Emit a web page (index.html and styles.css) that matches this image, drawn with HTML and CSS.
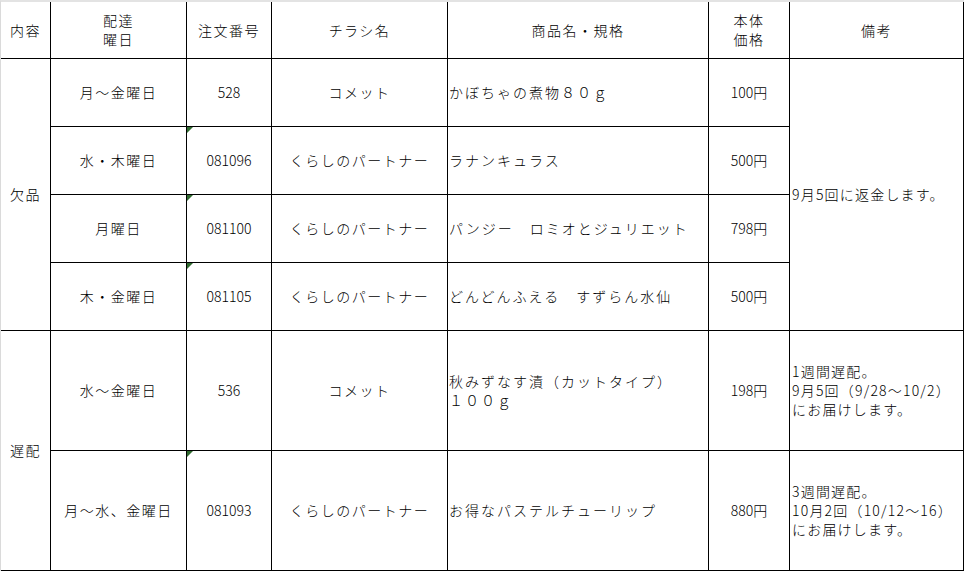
FILE: index.html
```html
<!DOCTYPE html>
<html lang="ja">
<head>
<meta charset="utf-8">
<title>欠品・遅配のお知らせ</title>
<link rel="stylesheet" href="styles.css">
</head>
<body>
<div class="sheet">
  <div class="cell">内容</div>
  <div class="cell">配達<br>曜日</div>
  <div class="cell">注文番号</div>
  <div class="cell">チラシ名</div>
  <div class="cell">商品名・規格</div>
  <div class="cell">本体<br>価格</div>
  <div class="cell">備考</div>

  <div class="cell span4">欠品</div>
  <div class="cell">月～金曜日</div>
  <div class="cell num">528</div>
  <div class="cell">コメット</div>
  <div class="cell left prod">かぼちゃの煮物８０ｇ</div>
  <div class="cell num">100円</div>
  <div class="cell left note span4">9月5回に返金します。</div>

  <div class="cell">水・木曜日</div>
  <div class="cell num flag">081096</div>
  <div class="cell">くらしのパートナー</div>
  <div class="cell left prod">ラナンキュラス</div>
  <div class="cell num">500円</div>

  <div class="cell">月曜日</div>
  <div class="cell num flag">081100</div>
  <div class="cell">くらしのパートナー</div>
  <div class="cell left prod">パンジー　ロミオとジュリエット</div>
  <div class="cell num">798円</div>

  <div class="cell">木・金曜日</div>
  <div class="cell num flag">081105</div>
  <div class="cell">くらしのパートナー</div>
  <div class="cell left prod">どんどんふえる　すずらん水仙</div>
  <div class="cell num">500円</div>

  <div class="cell span2">遅配</div>
  <div class="cell">水～金曜日</div>
  <div class="cell num">536</div>
  <div class="cell">コメット</div>
  <div class="cell left prod">秋みずなす漬（カットタイプ）<br>１００ｇ</div>
  <div class="cell num">198円</div>
  <div class="cell left note">1週間遅配。<br>9月5回（9/28～10/2）<br>にお届けします。</div>

  <div class="cell">月～水、金曜日</div>
  <div class="cell num flag">081093</div>
  <div class="cell">くらしのパートナー</div>
  <div class="cell left prod">お得なパステルチューリップ</div>
  <div class="cell num">880円</div>
  <div class="cell left note">3週間遅配。<br>10月2回（10/12～16）<br>にお届けします。</div>
</div>
</body>
</html>
```
FILE: styles.css
```css
html, body {
  margin: 0;
  padding: 0;
  background: #ffffff;
}

body {
  font-family: "Noto Sans CJK JP", "MS Gothic", sans-serif;
  font-size: 14px;
  font-weight: 300;
  color: #000000;
}

.sheet {
  display: grid;
  grid-template-columns: 50px 136px 85px 176px 261px 81px 174px;
  grid-template-rows: 57px 68px 68px 68px 68px 120px 120px;
  width: max-content;
  border-top: 2px solid #e3e3e3;
  border-left: 1px solid #dadada;
}

.cell {
  box-sizing: border-box;
  border-right: 1px solid #000000;
  border-bottom: 1px solid #000000;
  display: flex;
  align-items: center;
  justify-content: center;
  text-align: center;
  line-height: 19px;
  letter-spacing: 1.5px;
  position: relative;
  white-space: nowrap;
}

.cell.left {
  justify-content: flex-start;
  text-align: left;
  padding-left: 1px;
}

.cell.prod {
  letter-spacing: 2px;
}

.cell.note {
  padding-left: 2px;
  letter-spacing: 1.2px;
}

.cell.num {
  letter-spacing: 0;
}

.span4 {
  grid-row: span 4;
}

.span2 {
  grid-row: span 2;
}

.flag::before {
  content: "";
  position: absolute;
  top: 0;
  left: 0;
  width: 0;
  height: 0;
  border-top: 6px solid #2f6a2f;
  border-right: 6px solid transparent;
}
```
